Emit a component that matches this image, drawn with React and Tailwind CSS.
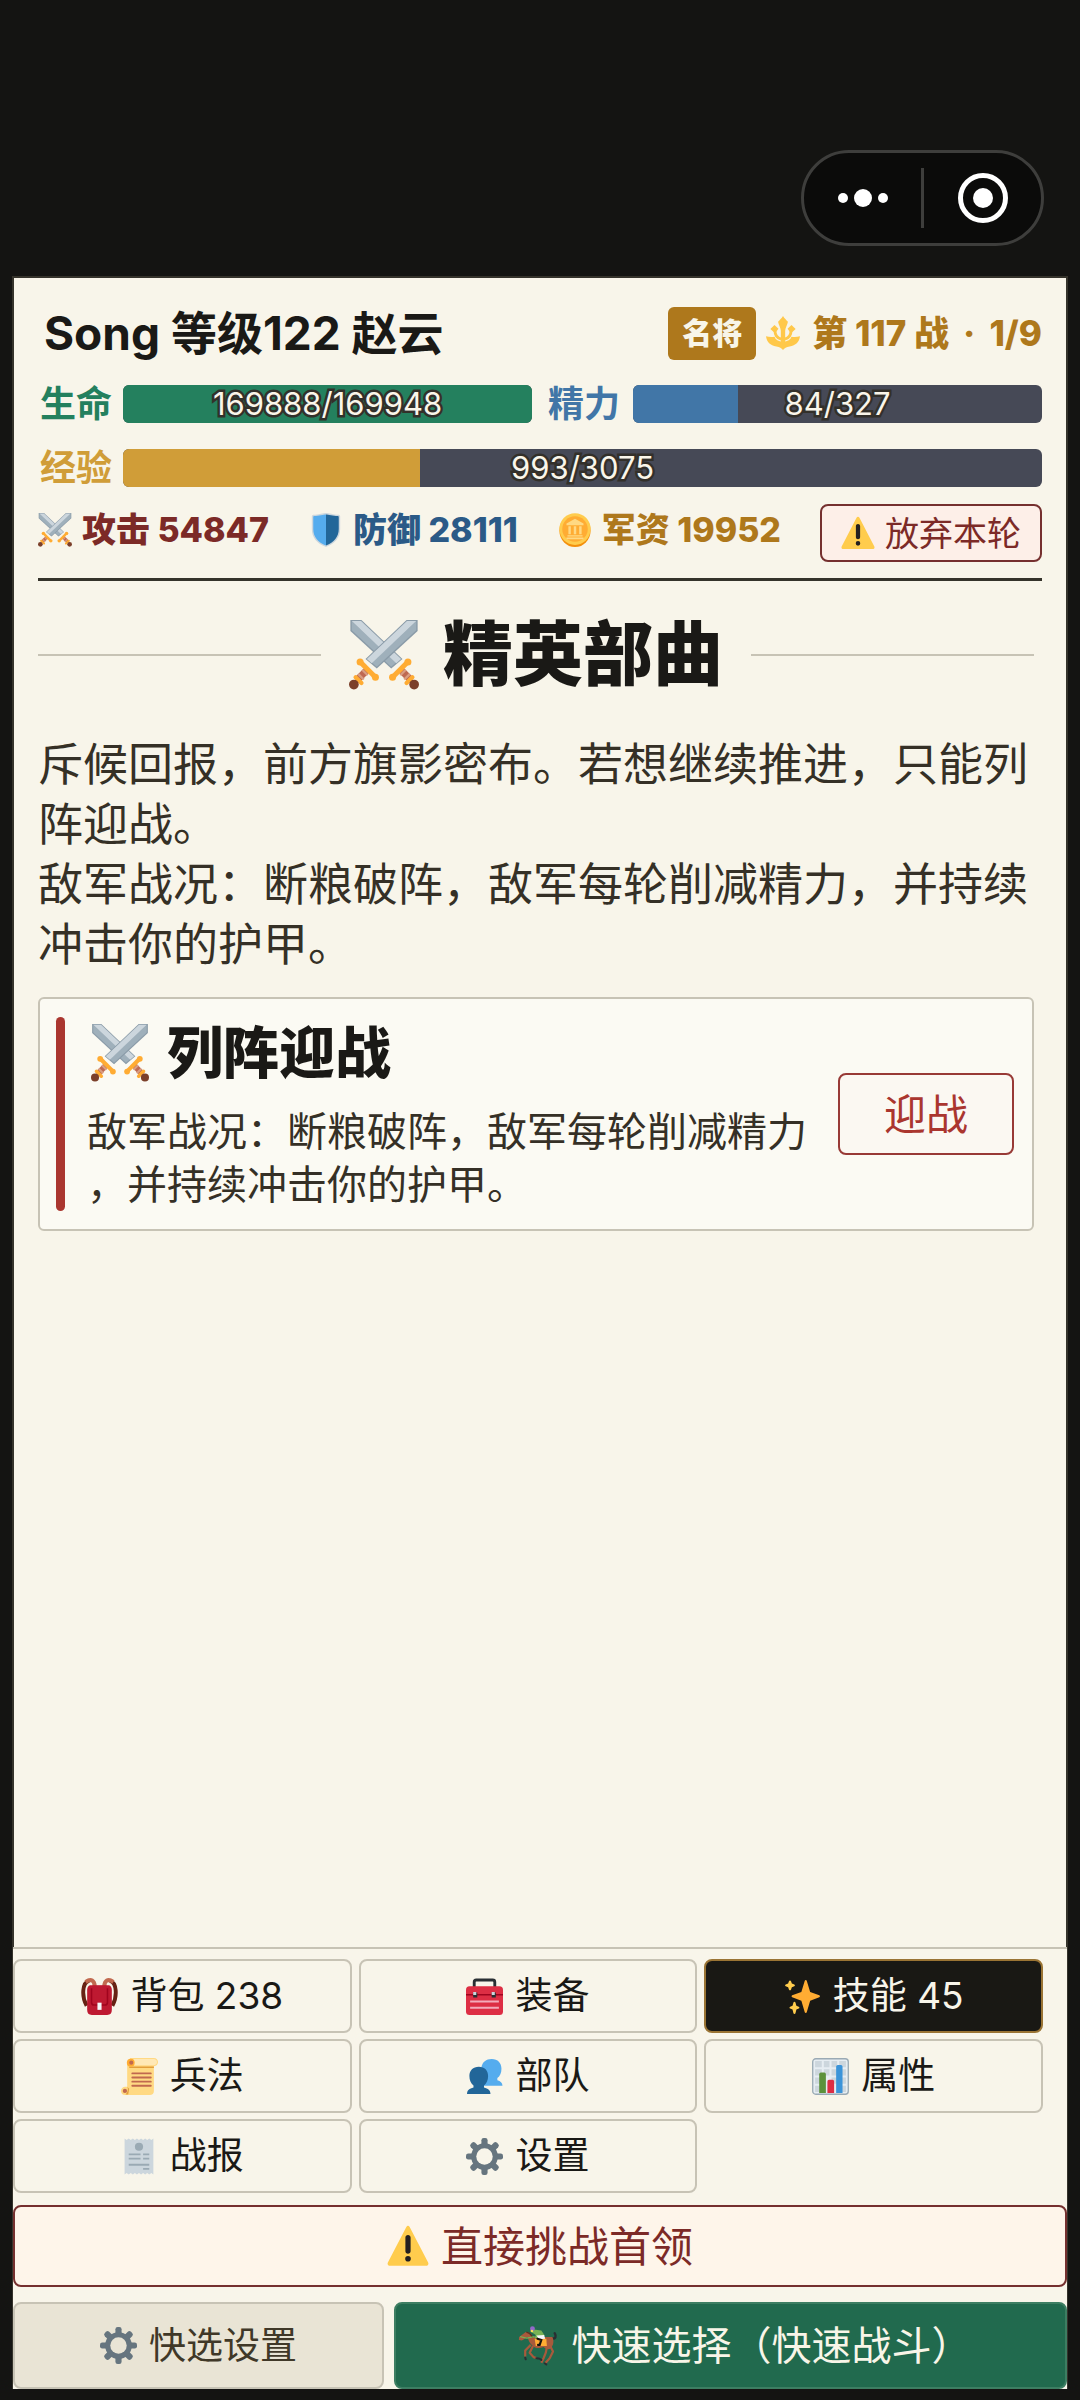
import React from 'react';
import clsx from 'clsx';

const Swords = ({ className }) => {
  const sword = (
    <g>
      <path fill="#8a9ba8" d="M35.3 0v5.6L14.3 25l-5.8-5L29.6 0z" />
      <path fill="#9fb0bb" d="M34.6.6v4.7L14.3 24l-2.6-2.2z" />
      <path fill="#ccd6dd" d="M34.6.5H29.8L9.2 20l2.5 2.2z" />
      <path stroke="#bf6952" strokeWidth="3.6" d="M10 25L4 31" />
      <path stroke="#d99e82" strokeWidth="1.2" d="M6.8 25.6l2.8 2.8M4.8 27.8l2.8 2.8" />
      <path stroke="#ffac33" strokeWidth="2.2" strokeLinecap="round" d="M3.4 29.4l3 3" />
      <path stroke="#ffac33" strokeWidth="2.6" d="M5.8 21.6l7.8 7.8" />
      <circle cx="5.7" cy="21.6" r="1.8" fill="#ffac33" />
      <circle cx="13.6" cy="29.5" r="1.8" fill="#ffac33" />
      <circle cx="2.5" cy="33.2" r="2.5" fill="#7b3f2a" />
    </g>
  );
  return (
    <svg viewBox="0 0 36 36" fill="none" className={className} aria-hidden="true">
      <g transform="translate(36 0) scale(-1 1)">{sword}</g>
      {sword}
    </svg>
  );
};

const Shield = ({ className }) => (
  <svg viewBox="0 0 36 36" className={className} aria-hidden="true">
    <path fill="#ccd6dd" d="M33 3.5c0-1.2-1-1.7-2.2-1.7C26.500 1.800 20 0 18 0S9.500 1.800 5.200 1.800C4 1.800 3 2.300 3 3.500V17c0 9 5.500 15.500 15 19 9.500-3.500 15-10 15-19z" />
    <path fill="#55acee" d="M18 1.500c-2 0-8 1.700-12.300 1.700-.8 0-1.200.4-1.200 1.200V17c0 8.200 5 14.100 13.500 17.400z" />
    <path fill="#226699" d="M18 1.500c2 0 8 1.700 12.300 1.700.8 0 1.200.4 1.200 1.200V17c0 8.200-5 14.100-13.500 17.400z" />
  </svg>
);

const Coin = ({ className }) => (
  <svg viewBox="0 0 36 36" className={className} aria-hidden="true">
    <ellipse cx="18" cy="18.500" rx="16.500" ry="17.500" fill="#f4900c" />
    <ellipse cx="18" cy="17" rx="16.500" ry="16.800" fill="#ffcc4d" />
    <circle cx="18" cy="17" r="13.500" fill="#ffac33" />
    <path fill="#ffd983" d="M18 6l9 5v2H9v-2zM10 23.500h16v1.500H10zM9 26h18v1.800H9zM11 14h2.600v8.500H11zM16.700 14h2.600v8.500h-2.600zM22.400 14H25v8.500h-2.600z" />
  </svg>
);

const Warning = ({ className }) => (
  <svg viewBox="0 0 36 36" className={className} aria-hidden="true">
    <path fill="#ffcc4d" d="M2.653 35C.811 35-.001 33.662.847 32.027L16.456 1.972c.849-1.635 2.238-1.635 3.087 0l15.609 30.056c.85 1.634.037 2.972-1.805 2.972H2.653z" />
    <path fill="#231f20" d="M15.583 28.953a2.421 2.421 0 0 1 2.419-2.418 2.421 2.421 0 0 1 2.418 2.418 2.422 2.422 0 0 1-2.418 2.419 2.422 2.422 0 0 1-2.419-2.419zm.186-18.293c0-1.302.961-2.108 2.232-2.108 1.241 0 2.233.837 2.233 2.108v11.938c0 1.271-.992 2.108-2.233 2.108-1.271 0-2.232-.807-2.232-2.108V10.660z" />
  </svg>
);

const Emblem = ({ className }) => {
  const side = (
    <g>
      <path d="M9 9.500l4.200 4-3.600 4.800-5-4.600z" />
      <path fill="none" stroke="#ffc84a" strokeWidth="3" d="M9.500 15.500c0 4 1.500 7.500 6.500 9" />
      <path d="M0 21.500c3 1 6 1 9 .6 1 3 4 5 9 5.400v8.500c-1.600-2-3.500-3.500-7-3.800C4.500 31.500.8 27.500 0 21.500z" />
    </g>
  );
  return (
    <svg viewBox="0 0 36 36" fill="#ffc84a" className={className} aria-hidden="true">
      {side}
      <g transform="translate(36 0) scale(-1 1)">{side}</g>
      <path d="M18 0c1.500 2.500 3.500 4.200 5.200 6-.5 3.500-2.700 6-2.900 9.500V30h-4.600V15.500c-.2-3.500-2.400-6-2.900-9.500C14.500 4.200 16.500 2.500 18 0z" />
    </svg>
  );
};

const Backpack = ({ className }) => (
  <svg viewBox="0 0 36 36" fill="none" className={className} aria-hidden="true">
    <path stroke="#662113" strokeWidth="3.800" d="M8 2.500C1 4.500.5 18 5.500 27M28 2.500c7 2 7.500 15.500 2.500 24.500" />
    <path stroke="#c1694f" strokeWidth="4" d="M4.500 3.800C10 .2 13 2.500 13.300 8M31.500 3.800C26 .2 23 2.500 22.700 8" />
    <path fill="#be1931" d="M10 7h16c3 0 4 2 4 5v19c0 3.500-1.500 5-4.500 5h-15C7.500 36 6 34.500 6 31V12c0-3 1-5 4-5z" />
    <path fill="#a0041e" d="M9.500 10h17v14c0 2-1.200 3-3 3h-11c-1.800 0-3-1-3-3z" />
    <path fill="#be1931" d="M11 7.500h14V23c0 1.700-.8 2.500-2.500 2.500h-9c-1.700 0-2.500-.8-2.500-2.500z" />
    <path fill="#f5f8fa" d="M16 24h4v7h-4z" />
  </svg>
);

const Toolbox = ({ className }) => (
  <svg viewBox="0 0 36 36" className={className} aria-hidden="true">
    <path fill="none" stroke="#292f33" strokeWidth="2.800" d="M8 9V4c0-1.500.5-2 2-2h16c1.500 0 2 .5 2 2v5" />
    <rect y="8" width="36" height="28" rx="3.500" fill="#dd2e44" />
    <path fill="#a0041e" d="M0 15.500h36v1.600H0z" />
    <path fill="#f4abba" d="M4 22h28v1.800H4zM4 28h28v1.800H4z" />
    <path fill="#292f33" d="M7 14h4v5H7zM25 14h4v5h-4z" />
    <path fill="#ccd6dd" d="M7 13.500h3v3H7zM25 13.500h3v3h-3z" />
  </svg>
);

const Sparkles = ({ className }) => (
  <svg viewBox="0 0 36 36" className={className} aria-hidden="true">
    <path fill="#ffac33" d="M34.347 16.893l-8.899-3.294-3.323-10.891c-.128-.42-.517-.708-.956-.708-.439 0-.828.288-.956.708l-3.322 10.891-8.900 3.294c-.393.146-.653.519-.653.938 0 .418.260.793.653.938l8.895 3.293 3.324 11.223c.126.424.516.715.959.715.442 0 .833-.291.959-.716l3.324-11.223 8.896-3.293c.391-.144.652-.518.652-.937 0-.418-.261-.792-.653-.938z" />
    <path fill="#ffcc4d" d="M14.347 27.894l-2.314-.856-.9-3.300c-.118-.436-.513-.738-.964-.738-.451 0-.846.302-.965.737l-.9 3.300-2.313.856c-.393.146-.653.520-.653.938 0 .418.260.793.653.938l2.301.853.907 3.622c.112.444.511.756.970.756.459 0 .858-.312.970-.757l.907-3.622 2.301-.853c.393-.144.653-.519.653-.937 0-.418-.260-.793-.653-.937zM10.009 6.231l-2.364-.875-.876-2.365c-.145-.393-.519-.653-.938-.653-.418 0-.792.260-.938.653l-.875 2.365-2.365.875c-.393.146-.653.520-.653.938 0 .418.260.793.653.938l2.365.875.875 2.365c.146.393.520.653.938.653.418 0 .792-.260.938-.653l.875-2.365 2.365-.875c.393-.146.653-.520.653-.938 0-.418-.260-.792-.653-.938z" />
  </svg>
);

const Scroll = ({ className }) => (
  <svg viewBox="0 0 36 36" className={className} aria-hidden="true">
    <path fill="#ffd983" d="M9 0h23c2.500 0 4 1.800 4 4s-1.500 4-4 4v24c0 2.500-1.500 4-4 4H4c-2.500 0-4-1.800-4-4s1.800-4 4-4h2V5z" />
    <path fill="#e39f3d" d="M8 8.300h24v1.500H8zM6 28c1 1.500 1 4-.5 6l-1 1.500H7L8 30z" />
    <path fill="#ffe8b6" d="M12 1h20c1.800 0 3 1.300 3 3s-1.200 3-3 3H12z" />
    <circle cx="9.500" cy="4.500" r="3.800" fill="#ffac33" />
    <circle cx="10" cy="4.500" r="2" fill="#c1694f" />
    <circle cx="3.800" cy="32" r="2.100" fill="#c1694f" />
    <path stroke="#c1694f" strokeWidth="1.800" strokeLinecap="round" d="M11 15h18M11 19h18M11 23h18M11 27h18" />
  </svg>
);

const People = ({ className }) => (
  <svg viewBox="0 0 36 36" className={className} aria-hidden="true">
    <path fill="#55acee" d="M25 1c6 0 9.500 4 9.500 9.500 0 4-1.500 7.500-4 9v2.200c3 1 5 2.300 5 5.300H15V9c1-5 4.500-8 10-8z" />
    <path fill="#226699" d="M12.500 8.500c5.700 0 9 3.700 9 9 0 4-1.500 7.500-4 9.200v2c4 1.200 6.300 2.700 6.300 6.300H1c0-3.600 2.300-5.100 6.300-6.300v-2c-2.500-1.700-4-5.200-4-9.200 0-5.300 3.500-9 9.200-9z" />
  </svg>
);

const Chart = ({ className }) => (
  <svg viewBox="0 0 36 36" className={className} aria-hidden="true">
    <rect x=".7" y=".7" width="34.600" height="34.600" rx="3" fill="#e6edf2" stroke="#9aaab4" strokeWidth="1.300" />
    <path fill="#ccd6dd" d="M3 3h6.500v6H3zM11.500 3H17v6h-5.500zM19 3h5.500v6H19zM26.500 3H33v6h-6.500zM3 11h6.500v6H3zM11.500 11H17v6h-5.500zM19 11h5.500v6H19zM3 19h6.500v6H3zM19 19h5.500v6H19zM3 27h6.500v6H3zM28 11h5v6h-5zM28 19h5v6h-5zM28 27h5v6h-5z" />
    <path fill="#5c913b" d="M7 34V16c0-1 .7-1.800 1.600-1.800h3.300c1 0 1.600.8 1.600 1.800v18z" />
    <path fill="#dd2e44" d="M15 34V23c0-1 .7-1.800 1.600-1.800h3.300c1 0 1.600.8 1.600 1.800v11z" />
    <path fill="#3b94d9" d="M23.500 34V8.500c0-1 .7-1.800 1.600-1.800h3c1 0 1.600.8 1.600 1.800V34z" />
  </svg>
);

const Receipt = ({ className }) => (
  <svg viewBox="0 0 36 36" className={className} aria-hidden="true">
    <path fill="#ccd6dd" d="M3.500.5l2 1.400 2-1.400 2 1.400 2-1.400 2 1.400 2-1.400 2 1.400 2-1.400 2 1.400 2-1.400 2 1.400 2-1.400 2 1.400 2-1.400v35l-2-1.400-2 1.400-2-1.400-2 1.400-2-1.400-2 1.400-2-1.400-2 1.400-2-1.400-2 1.400-2-1.400-2 1.400-2-1.400-2 1.400z" />
    <circle cx="17.500" cy="8.500" r="4" fill="#9aaab4" />
    <path stroke="#9aaab4" strokeWidth="1.800" d="M7.500 16H19M21.500 16h6M7.500 20H19M21.500 20h6M7.500 26h20M21.500 30h6" />
  </svg>
);

const Gear = ({ className }) => (
  <svg viewBox="0 0 36 36" className={className} aria-hidden="true">
    <g fill="#66757f">
      {[0, 45, 90, 135].map((angle) => (
        <rect key={angle} x="15" width="6" height="36" rx="2.200" transform={`rotate(${angle} 18 18)`} />
      ))}
    </g>
    <circle cx="18" cy="18" r="13" fill="#66757f" />
    <circle cx="18" cy="18" r="8" className="fill-(--hole)" />
  </svg>
);

const Horse = ({ className }) => (
  <svg viewBox="0 0 36 36" fill="none" className={className} aria-hidden="true">
    <path stroke="#292f33" strokeWidth="2.200" strokeLinecap="round" d="M31 11c3 1 3.500-2 2-4.500" />
    <path fill="#a85a3c" d="M1 10l6-4.500c3 0 5 1.500 6.500 4.500H31c1.800 4 .8 8-2 10.500-2 1-4.500 0-6-1.500-4 1.500-8 1-10-1.500-2.500-1.500-3.700-4.500-4.200-7.500L3.500 13 .8 12.500z" />
    <path stroke="#a85a3c" strokeWidth="2" strokeLinejoin="round" d="M11.500 17L6.500 22v5.500M13.500 18l-3 6 3.500 4 3 1M29 18l2.500 5-3 6-4 4.500M26 19l-1 5-2 5-2 4" />
    <path stroke="#292f33" strokeWidth="1.800" strokeLinecap="round" d="M6.500 28.500l.5 1.500M16.500 29l2 .3M24 33.500l1.500 1M19.500 29.500l1.500 1" />
    <path stroke="#5c3322" strokeWidth="1.300" d="M7.500 5.500c2.500.5 4.500 2 5.500 5" />
    <path stroke="#77b255" strokeWidth="1.100" d="M2 9.500l6 1.500 7-1.500" />
    <path fill="#ffac33" d="M15 11.500h10.500l.5 6.500H16z" />
    <path fill="#77b255" d="M12.500 3l8.500 1 3 4.500-2 2.500h-7l1-3-4-2.500z" />
    <path fill="#f5f8fa" d="M16.500 8.500l7-.5 1 3.500-5.500.5z" />
    <path stroke="#17130f" strokeWidth="1.900" strokeLinecap="round" d="M17.500 11.500l3.500 1-1.500 4.500h-1.500" />
    <circle cx="13" cy="2.500" r="2.200" fill="#9268ca" />
    <circle cx="12.500" cy="4.500" r="1.200" fill="#ffdc5d" />
  </svg>
);

const Meter = ({ label, value, max, labelClass, fillClass }) => (
  <>
    <span className={clsx('shrink-0 text-4xl/10 font-bold', labelClass)}>{label}</span>
    <div
      role="progressbar"
      aria-label={label}
      aria-valuenow={value}
      aria-valuemax={max}
      className="grid h-[38px] flex-1 overflow-hidden rounded-md bg-[#464956]"
    >
      <div
        className={clsx('col-start-1 row-start-1', fillClass)}
        style={{ width: `${(value / max) * 100}%` }}
      />
      <span className="col-start-1 row-start-1 self-center text-center text-[31px] leading-9 text-[#faf6ea] [-webkit-text-stroke:5px_#33302a] [paint-order:stroke_fill]">
        {value}/{max}
      </span>
    </div>
  </>
);

const stats = [
  { icon: Swords, label: '攻击', value: 54847, color: 'text-[#7c2a27]' },
  { icon: Shield, label: '防御', value: 28111, color: 'text-[#2b5a87]' },
  { icon: Coin, label: '军资', value: 19952, color: 'text-[#ae781c]' },
];

const menu = [
  { icon: Backpack, label: '背包 238' },
  { icon: Toolbox, label: '装备' },
  { icon: Sparkles, label: '技能 45', active: true },
  { icon: Scroll, label: '兵法' },
  { icon: People, label: '部队' },
  { icon: Chart, label: '属性' },
  { icon: Receipt, label: '战报' },
  { icon: Gear, label: '设置' },
];

const Capsule = () => (
  <div className="flex h-24 w-[243px] items-center rounded-full border-3 border-[#3e3e3c] bg-[#0b0b0a]">
    <button type="button" aria-label="更多" className="flex flex-1 justify-center">
      <svg viewBox="0 0 52 18" className="h-[18px] w-[52px]" fill="#fff">
        <circle cx="6" cy="9" r="5" />
        <circle cx="26" cy="9" r="9" />
        <circle cx="46" cy="9" r="5" />
      </svg>
    </button>
    <span className="h-15 w-[3px] bg-[#3e3e3c]" />
    <button type="button" aria-label="关闭" className="flex flex-1 justify-center">
      <svg viewBox="0 0 50 50" className="size-[50px]">
        <circle cx="25" cy="25" r="22.500" fill="none" stroke="#fff" strokeWidth="5" />
        <circle cx="25" cy="25" r="10" fill="#fff" />
      </svg>
    </button>
  </div>
);

const StatusHeader = () => (
  <header className="mx-6 border-b-3 border-[#35332b] pt-7 pb-4">
    <div className="flex items-center justify-between">
      <h1 className="pl-1.5 text-[46px] leading-[54px] font-bold text-[#1a1916]">Song 等级122 赵云</h1>
      <div className="flex items-center text-[35px] leading-[54px] font-extrabold text-[#ae781c]">
        <span className="rounded-md bg-[#ae781c] px-3.5 text-[30px] leading-[53px] text-[#f8f5e8]">名将</span>
        <Emblem className="mr-3 ml-2.5 size-[34px]" />
        第 117 战<span className="mx-3.5">·</span>1/9
      </div>
    </div>

    <div className="mt-6 flex items-center">
      <Meter label="生命" value={169888} max={169948} labelClass="w-[85px] pl-0.5 text-[#24805e]" fillClass="bg-[#24805e]" />
      <Meter label="精力" value={84} max={327} labelClass="w-[101px] pl-4 text-[#4176a7]" fillClass="bg-[#4176a7]" />
    </div>
    <div className="mt-6 flex items-center">
      <Meter label="经验" value={993} max={3075} labelClass="w-[85px] pl-0.5 text-[#d09d38]" fillClass="bg-[#d09d38]" />
    </div>

    <div className="mt-4 flex items-center justify-between">
      <div className="flex gap-10 pb-1.5">
        {stats.map(({ icon: Icon, label, value, color }) => (
          <div key={label} className={clsx('flex items-center gap-2.5 text-[34px] leading-10 font-extrabold', color)}>
            <Icon className="size-[34px]" />
            {label} {value}
          </div>
        ))}
      </div>
      <button
        type="button"
        className="flex h-[58px] items-center gap-2.5 rounded-lg border-2 border-[#75302f] bg-[#fdefe8] px-[19px] text-[34px] text-[#7c2a27]"
      >
        <Warning className="size-[34px]" />
        放弃本轮
      </button>
    </div>
  </header>
);

const App = () => {
  return (
    <div className="flex min-h-screen flex-col bg-[#141412] px-3 pb-[11px] font-['Inter','Noto_Sans_CJK_SC',sans-serif]" lang="zh-CN">
      <div className="flex h-[276px] shrink-0 items-end justify-end pr-6 pb-[30px]">
        <Capsule />
      </div>

      <div className="flex flex-1 flex-col border-2 border-[#35332b] bg-[#f8f5ea]">
        <StatusHeader />

        <main className="flex-1 pt-8 pr-8 pb-10 pl-6">
          <div className="flex items-center gap-7">
            <span className="h-0.5 flex-1 bg-[#c7c3b5]" />
            <h2 className="flex items-center gap-6 text-[70px] leading-[84px] font-extrabold text-[#1a1916]">
              <Swords className="size-[70px]" />
              精英部曲
            </h2>
            <span className="h-0.5 flex-1 bg-[#c7c3b5]" />
          </div>

          <div className="mt-[38px] text-[45px] leading-[60px] text-[#353026]">
            <p>斥候回报，前方旗影密布。若想继续推进，只能列阵迎战。</p>
            <p>敌军战况：断粮破阵，敌军每轮削减精力，并持续冲击你的护甲。</p>
          </div>

          <section className="mt-[22px] flex gap-4 rounded-md border-2 border-[#c7c3b5] bg-[#fbfaf3] p-[18px] pl-4">
            <span className="w-[9px] shrink-0 rounded-full bg-[#aa362f]" />
            <div className="min-w-0 flex-1 pl-1.5">
              <h3 className="flex items-center gap-[18px] pl-1 text-[56px] leading-[72px] font-extrabold text-[#1a1916]">
                <Swords className="size-[58px]" />
                列阵迎战
              </h3>
              <p className="mt-4 text-[40px] leading-[53px] text-[#353026] [line-break:anywhere]">
                敌军战况：断粮破阵，敌军每轮削减精力，并持续冲击你的护甲。
              </p>
            </div>
            <button
              type="button"
              className="h-[82px] w-44 shrink-0 self-center rounded-lg border-2 border-[#983a36] bg-[#fbf8f2] text-[42px] text-[#aa362f]"
            >
              迎战
            </button>
          </section>
        </main>

        <footer className="-mx-px -mb-0.5 border-t-2 border-[#c7c3b5] bg-[#f8f5ea] pt-2.5">
          <nav className="grid grid-cols-3 gap-x-[7px] gap-y-1.5 pr-6">
            {menu.map(({ icon: Icon, label, active }) => (
              <button
                key={label}
                type="button"
                className={clsx(
                  'flex h-[74px] items-center justify-center gap-3 rounded-lg border-2 text-[37px] [--hole:#f8f5ea]',
                  active ? 'border-[#9a7434] bg-[#191814] text-[#f8f5ea]' : 'border-[#c7c3b5] text-[#1a1916]'
                )}
              >
                <Icon className="size-[37px]" />
                {label}
              </button>
            ))}
          </nav>
          <button
            type="button"
            className="mt-3 flex h-[82px] w-full items-center justify-center gap-3 rounded-lg border-2 border-[#75302f] bg-[#fef5ea] text-[42px] text-[#7c2a27]"
          >
            <Warning className="size-[42px]" />
            直接挑战首领
          </button>
          <div className="mt-[15px] grid grid-cols-[371fr_673fr] gap-2.5">
            <button
              type="button"
              className="flex h-[87px] items-center justify-center gap-3 rounded-lg border-2 border-[#c7c3b5] bg-[#e9e4d5] text-[37px] text-[#403828] [--hole:#e9e4d5]"
            >
              <Gear className="size-[37px]" />
              快选设置
            </button>
            <button
              type="button"
              className="flex h-[87px] items-center justify-center gap-3.5 rounded-lg border-2 border-[#3d7e62] bg-[#216a4e] pl-7 text-[40px] text-[#f8f5e8]"
            >
              <Horse className="size-10" />
              快速选择（快速战斗）
            </button>
          </div>
        </footer>
      </div>
    </div>
  );
};

export default App;
